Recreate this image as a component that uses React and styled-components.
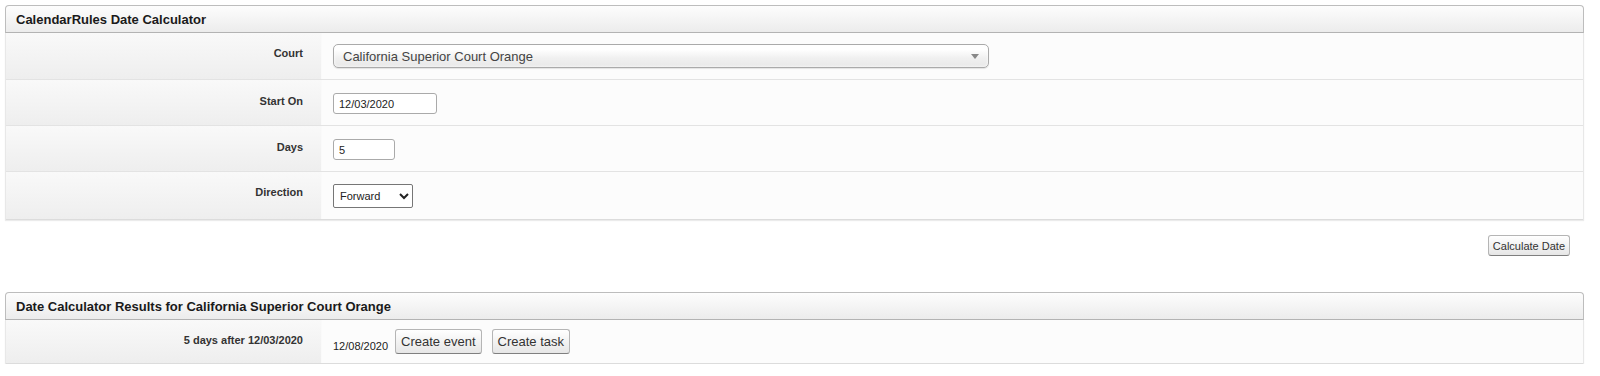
import React from "react";
import styled, { createGlobalStyle } from "styled-components";

const GlobalStyle = createGlobalStyle`
  html, body { margin: 0; padding: 0; background: #fff; }
  body { font-family: Arial, "Liberation Sans", sans-serif; color: #222; }
`;

const Page = styled.div`
  padding: 5px 16px 0 5px;
`;

const Panel = styled.section`
  display: flex;
  flex-direction: column;
`;

const PanelHeader = styled.div`
  height: 26px;
  border: 1px solid #bdbdbd;
  border-bottom-color: #b3b3b3;
  border-radius: 4px 4px 0 0;
  background: linear-gradient(#fdfdfd, #ececec);
  display: flex;
  align-items: center;
  padding-left: 10px;
`;

const Title = styled.h2`
  margin: 0;
  font-size: 13px;
  font-weight: bold;
  color: #1a1a1a;
`;

const PanelBody = styled.div`
  border-left: 1px solid #e8e8e8;
  border-right: 1px solid #e8e8e8;
  box-shadow: 0 1px 1px rgba(0, 0, 0, 0.08);
`;

const Row = styled.div`
  display: grid;
  grid-template-columns: 316px 1fr;
  border-bottom: 1px solid #e3e3e3;
  &:last-child { border-bottom: 1px solid #dcdcdc; }
`;

const LabelCell = styled.div`
  background: linear-gradient(#f9f9f9, #eeeeee);
  text-align: right;
  padding: ${(p) => p.$top}px 18px 0 0;
  font-size: 11px;
  font-weight: bold;
  color: #333;
  border-right: 1px solid #fafafa;
`;

const DataCell = styled.div`
  background: #fcfcfc;
  padding: ${(p) => p.$top}px 0 ${(p) => p.$bottom ?? 11}px 11px;
  display: flex;
  align-items: ${(p) => (p.$end ? "flex-end" : "flex-start")};
  gap: 10px;
`;

const FancySelect = styled.div`
  width: 656px;
  height: 24px;
  box-sizing: border-box;
  border: 1px solid #aaa;
  border-radius: 5px;
  background: linear-gradient(#ffffff 20%, #f0f0f0 60%, #e8e8e8);
  box-shadow: 0 0 3px #fff inset, 0 1px 1px rgba(0, 0, 0, 0.1);
  display: flex;
  align-items: center;
  justify-content: space-between;
  padding: 0 9px 0 9px;
  font-size: 13px;
  color: #444;
`;

const Caret = styled.span`
  width: 0;
  height: 0;
  border-left: 4px solid transparent;
  border-right: 4px solid transparent;
  border-top: 5px solid #888;
`;

const TextInput = styled.input`
  box-sizing: border-box;
  width: ${(p) => p.$w}px;
  height: 21px;
  border: 1px solid #aaa;
  border-radius: 3px;
  padding: 0 5px;
  font-family: Arial, "Liberation Sans", sans-serif;
  font-size: 11px;
  color: #222;
  background: #fff;
  outline: none;
`;

const NativeSelect = styled.select`
  box-sizing: border-box;
  width: 80px;
  height: 24px;
  border: 1px solid #767676;
  border-radius: 2px;
  padding: 0 2px;
  font-family: Arial, "Liberation Sans", sans-serif;
  font-size: 11px;
  color: #222;
  background: #fff;
`;

const ButtonBar = styled.div`
  display: flex;
  justify-content: flex-end;
  padding: 15px 14px 36px 0;
`;

const Button = styled.button`
  box-sizing: border-box;
  height: ${(p) => (p.$big ? 25 : 21)}px;
  padding: 0 ${(p) => (p.$big ? 5 : 4)}px;
  border: 1px solid #b5b5b5;
  border-bottom-color: #7f7f7f;
  border-radius: 3px;
  background: linear-gradient(#ffffff, #e6e6e6);
  font-family: Arial, "Liberation Sans", sans-serif;
  font-size: ${(p) => (p.$big ? 13 : 11)}px;
  color: #333;
  cursor: pointer;
`;

const ResultDate = styled.span`
  font-size: 11px;
  color: #222;
  margin-bottom: 2px;
  margin-right: -3px;
`;

export default function App() {
  return (
    <>
      <GlobalStyle />
      <Page>
        <Panel>
          <PanelHeader>
            <Title>CalendarRules Date Calculator</Title>
          </PanelHeader>
          <PanelBody>
            <Row>
              <LabelCell $top={14}>Court</LabelCell>
              <DataCell $top={11}>
                <FancySelect>
                  <span>California Superior Court Orange</span>
                  <Caret />
                </FancySelect>
              </DataCell>
            </Row>
            <Row>
              <LabelCell $top={15}>Start On</LabelCell>
              <DataCell $top={13}>
                <TextInput $w={104} defaultValue="12/03/2020" />
              </DataCell>
            </Row>
            <Row>
              <LabelCell $top={15}>Days</LabelCell>
              <DataCell $top={13}>
                <TextInput $w={62} defaultValue="5" />
              </DataCell>
            </Row>
            <Row>
              <LabelCell $top={14}>Direction</LabelCell>
              <DataCell $top={12}>
                <NativeSelect defaultValue="Forward">
                  <option>Forward</option>
                  <option>Backward</option>
                </NativeSelect>
              </DataCell>
            </Row>
          </PanelBody>
        </Panel>

        <ButtonBar>
          <Button>Calculate Date</Button>
        </ButtonBar>

        <Panel>
          <PanelHeader>
            <Title>Date Calculator Results for California Superior Court Orange</Title>
          </PanelHeader>
          <PanelBody>
            <Row>
              <LabelCell $top={14}>
                5 days after 12/03/2020
              </LabelCell>
              <DataCell $top={9} $bottom={9} $end>
                <ResultDate>12/08/2020</ResultDate>
                <Button $big>Create event</Button>
                <Button $big>Create task</Button>
              </DataCell>
            </Row>
          </PanelBody>
        </Panel>
      </Page>
    </>
  );
}
